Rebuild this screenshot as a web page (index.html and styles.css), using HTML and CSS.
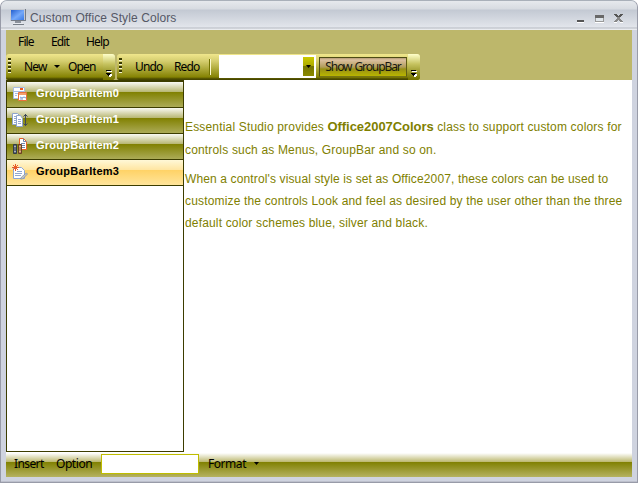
FILE: index.html
```html
<!DOCTYPE html>
<html lang="en">
<head>
<meta charset="utf-8">
<title>Custom Office Style Colors</title>
<link rel="stylesheet" href="styles.css">
</head>
<body>
<div class="window">
  <header class="titlebar">
    <svg class="app-icon" width="18" height="18" viewBox="0 0 18 18">
      <defs><linearGradient id="screen" x1="0" y1="0" x2="1" y2="1"><stop offset="0" stop-color="#235fd0"/><stop offset=".55" stop-color="#75a9fa"/><stop offset="1" stop-color="#3979e5"/></linearGradient></defs>
      <path d="M0 0h16v12H0z" fill="#c5c9d0"/><path d="M1 1h13v10H1z" fill="url(#screen)"/><path d="M15 0h1v12H1v-1h14z" fill="#747b87"/>
      <path d="M5 12h6v2H5z" fill="#8b919b"/><path d="M3 14h10v1H3z" fill="#e7eaf0"/><path d="M3 15h11v1H3z" fill="#777e88"/>
    </svg>
    <h1 class="title">Custom Office Style Colors</h1>
    <svg class="controls" width="52" height="14" viewBox="0 0 52 14" shape-rendering="crispEdges">
      <path d="M1 9h7v2H1z" fill="#555"/><path d="M1 11h7v1H1z" fill="#fff"/>
      <path d="M19 4h9v3h-9z" fill="#686868"/><path d="M19 7h1v4h-1zM27 7h1v4h-1zM19 10h9v1h-9z" fill="#9a9a9a"/><path d="M20 7h7v3h-7z" fill="#dfe5ea"/><path d="M19 11h9v1h-9z" fill="#fff"/>
      <path d="M38 3h3v1h-3zM44 3h3v1h-3zM39 4h3v1h-3zM43 4h3v1h-3zM40 5h5v1h-5z" fill="#555"/><path d="M41 6h3v2h-3zM40 8h5v1h-5zM39 9h3v1h-3zM43 9h3v1h-3zM38 10h3v1h-3zM44 10h3v1h-3z" fill="#888"/><path d="M38 11h3v1h-3zM44 11h3v1h-3z" fill="#fff"/>
    </svg>
  </header>
  <div class="client">
    <nav class="menu"><span class="file">File</span><span class="edit">Edit</span><span class="help">Help</span></nav>
    <div class="toolbars">
      <div class="toolbar first">
        <i class="grip"></i><span class="new">New</span><i class="arrow"></i><span class="open">Open</span>
        <i class="cap"><svg width="7" height="8" viewBox="0 0 7 8" shape-rendering="crispEdges"><path d="M1 1h5v1H1zM1 4h5v1H1zM2 5h4v1H2zM3 6h2v1H3z" fill="#fff"/><path d="M0 0h5v1H0zM0 3h5v1H0zM1 4h3v1H1zM2 5h1v1H2z" fill="#000"/></svg></i>
      </div>
      <div class="toolbar second">
        <i class="grip"></i><span class="undo">Undo</span><span class="redo">Redo</span><i class="separator"></i>
        <div class="combo"><i class="drop"><b class="arrow"></b></i></div>
        <div class="button"><span>Show GroupBar</span></div>
        <i class="cap"><svg width="7" height="8" viewBox="0 0 7 8" shape-rendering="crispEdges"><path d="M1 1h5v1H1zM1 4h5v1H1zM2 5h4v1H2zM3 6h2v1H3z" fill="#fff"/><path d="M0 0h5v1H0zM0 3h5v1H0zM1 4h3v1H1zM2 5h1v1H2z" fill="#000"/></svg></i>
      </div>
    </div>
    <main class="workspace">
      <aside class="groupbar">
        <div class="item"><svg width="16" height="16" viewBox="0 0 16 16"><path d="M1.500 1.500h11v11h-11z" fill="#fff" stroke="#a7bce3"/><path d="M8 2h3v2H8z" fill="#ed5922"/><path d="M3 7.500h3M3 9.500h2M1 5.500h11" stroke="#a7bce3"/><path d="M6.500 6.500h8v8h-8z" fill="#fff" stroke="#e9713c"/><path d="M7 8h7" stroke="#f2a06f" stroke-width="2"/><path d="M8 11l2 1 2-1 2 1M8 13h3" fill="none" stroke="#7897ce"/></svg><span>GroupBarItem0</span></div>
        <div class="item"><svg width="16" height="16" viewBox="0 0 16 16"><path d="M.5 1.500h5l3 3v8h-8z" fill="#fff" stroke="#8fa5cc"/><path d="M4.500 3.500h4l2 3v8h-6z" fill="#fff" stroke="#8fa5cc"/><path d="M2 4.500h2M2 6.500h2M2 8.500h2M2 10.500h2M6 7.500h3M6 9.500h3M6 11.500h3" stroke="#94a9d0"/><path d="M13.500 2v12M11.500 4.500l2-2 2 2M11.500 11.500l2 2 2-2" fill="none" stroke="#3e4857"/></svg><span>GroupBarItem1</span></div>
        <div class="item"><svg width="16" height="16" viewBox="0 0 16 16"><path d="M7.500.500h4l3 3v8h-7z" fill="#fff" stroke="#e86026"/><path d="M11.500.500v3h3M9 5.500h4M9 7.500h4M9 9.500h4" fill="none" stroke="#7185ac"/><path d="M1.500 6.500h3v9h-3z" fill="#626b7a" stroke="#333c47"/><path d="M6.500 6.500h3v9h-3z" fill="#b98155" stroke="#694224"/><path d="M2 8.500h2M2 13.500h2" stroke="#abb1bc"/><path d="M7 8.500h2M7 13.500h2" stroke="#d8b28a"/></svg><span>GroupBarItem2</span></div>
        <div class="item selected"><svg width="16" height="16" viewBox="0 0 16 16"><path d="M1.500 3.500h8l3 3v8h-11z" fill="#fff" stroke="#8ba6d7"/><path d="M5 7.500h5M3 9.500h7M3 11.500h6" stroke="#91a7d0"/><path d="M14.500 9l1 1-5 5-2 0 1-2z" fill="#cac9c7" stroke="#75889e" stroke-width=".7"/><path d="M3.500 0v7M0 3.500h7M1 1l5 5M6 1L1 6" stroke="#e85a28"/></svg><span>GroupBarItem3</span></div>
      </aside>
      <article class="document">
        <p class="intro">Essential Studio provides <strong>Office2007Colors</strong> class to support custom colors for<br>controls such as Menus, GroupBar and so on.</p>
        <p class="detail">When a control's visual style is set as Office2007, these colors can be used to<br><span class="roomy">customize the controls Look and feel as desired by the user other than the three</span><br><span class="roomy">default color schemes blue, silver and black.</span></p>
      </article>
    </main>
    <footer class="status"><span class="insert">Insert</span><span class="option">Option</span><div class="field"></div><span class="format">Format</span><i class="arrow"></i></footer>
  </div>
</div>
</body>
</html>
```

FILE: styles.css
```css
* { box-sizing: border-box; }
body { margin: 0; background: #fff; font: 12px "Liberation Sans", sans-serif; color: #000; }
h1, p { margin: 0; }
i { display: block; }
.window { width: 638px; height: 483px; padding: 0 5px 5px; border: 1px solid #989ba8; border-top-color: #a9b0b9; border-radius: 7px 7px 0 0; background: #cfd3df; display: flex; flex-direction: column; overflow: hidden; box-shadow: inset 0 -1px #bdc0cc; }
.titlebar { height: 29px; flex: none; margin: 0 -5px; padding: 8px 7px 0 9px; display: flex; align-items: flex-start; background: linear-gradient(#e6e9ed 0, #d7dbe1 8px, #c3c9d3 9px, #e2e5eb 26px, #b6bac2 27px, #e9ebef 28px); }
.app-icon { flex: none; }
.title { font: 12px/19px "Liberation Sans", sans-serif; color: #555866; margin-left: 2px; letter-spacing: .1px; white-space: nowrap; }
.controls { margin: 2px 2px 0 auto; }
.client { width: 626px; height: 447px; display: flex; flex-direction: column; }
.menu { height: 24px; background: #bdb76b; display: flex; line-height: 24px; }
.menu, .toolbar, .status { font-family: "Noto Sans", "Open Sans", sans-serif; font-size: 12px; white-space: nowrap; letter-spacing: -.85px; }
.file { width: 33px; margin-left: 12px; }
.edit { width: 35px; }
.toolbars { height: 26px; display: flex; gap: 2px; background: #bdb76b; }
.toolbar { height: 26px; display: flex; line-height: 26px; background: linear-gradient(#f0e68c, #d5ce6f 7px, #858303 23px, #484800 25px, #484800); border-radius: 3px 4px 4px 2px; }
.first { width: 109px; }
.second { width: 303px; }
.grip { width: 3px; height: 15px; margin: 4px 12px 0 2px; background: repeating-linear-gradient(#393900 0 2px, #f7f4d1 2px 3px, transparent 3px 4px); }
.new { width: 26px; margin-left: 1px; }
.arrow { width: 5px; height: 3px; background: #000; clip-path: polygon(0 0, 100% 0, 50% 100%); }
.toolbar > .arrow { width: 6px; margin: 11px 8px 0 4px; }
.cap { width: 12px; margin-left: auto; border-radius: 0 3px 3px 0; background: linear-gradient(#ffffca, #c6c360 10px, #777600 25px); padding: 16px 0 0 3px; }
.cap svg { display: block; }
.undo { width: 39px; margin-left: 1px; }
.redo { width: 35px; }
.separator { width: 2px; height: 16px; margin-top: 5px; background: linear-gradient(90deg, #737300 50%, #faf8cf 50%); }
.combo { width: 97px; height: 23px; margin: 1px 3px 0 8px; padding: 2px 2px 2px 84px; background: #fff; }
.drop { width: 11px; height: 19px; padding: 8px 3px; background: linear-gradient(#cbc900, #aaa800 50%, #757500 50%, #8b8a00); }
.drop .arrow { display: block; }
.button { width: 88px; height: 20px; margin-top: 3px; border: 1px solid #4c4a14; border-right-color: #5f5d15; border-bottom-color: #777515; text-align: center; line-height: 18px; background: linear-gradient(#b59a76, #dcc0a0 2px, #b29d5c 9px, #989016 11px, #b9b500 18px); letter-spacing: -1.1px; word-spacing: 1px; color: #17170e; }
.workspace { height: 373px; display: flex; background: #fff; }
.groupbar { width: 178px; height: 372px; border: 1px solid #3d3d00; border-top-width: 2px; background: #fff; }
.item { height: 26px; padding: 4px 5px; border-bottom: 1px solid #3d3d00; display: flex; gap: 8px; color: #fff; font-weight: bold; font-size: 11px; line-height: 15px; letter-spacing: .24px; background: linear-gradient(#f9f9f3, #b7b671 10px, #808000 10px, #acab57 25px); }
.item svg { flex: none; }
.selected { color: #000; background: linear-gradient(#fff8d7, #ffe5a0 10px, #ffd266 10px, #ffe59b 25px); }
.document { padding: 35px 0 0 1px; width: 448px; color: #808000; line-height: 22px; letter-spacing: .17px; white-space: nowrap; }
.intro { line-height: 23px; }
.intro strong { font-size: 13px; letter-spacing: -.05px; }
.detail { margin-top: 6px; letter-spacing: .13px; }
.roomy { letter-spacing: .165px; }
.status { height: 24px; background: linear-gradient(#fff, #bbb76d 9px, #808000 9px, #b5b260 24px); display: flex; line-height: 22px; letter-spacing: -.45px; }
.insert { width: 42px; margin-left: 8px; letter-spacing: -.6px; }
.option { width: 45px; }
.field { width: 98px; height: 20px; margin-top: 1px; background: #fff; border: 1px solid #bfbd00; }
.format { width: 46px; margin-left: 9px; }
.status .arrow { margin-top: 9px; }
```
